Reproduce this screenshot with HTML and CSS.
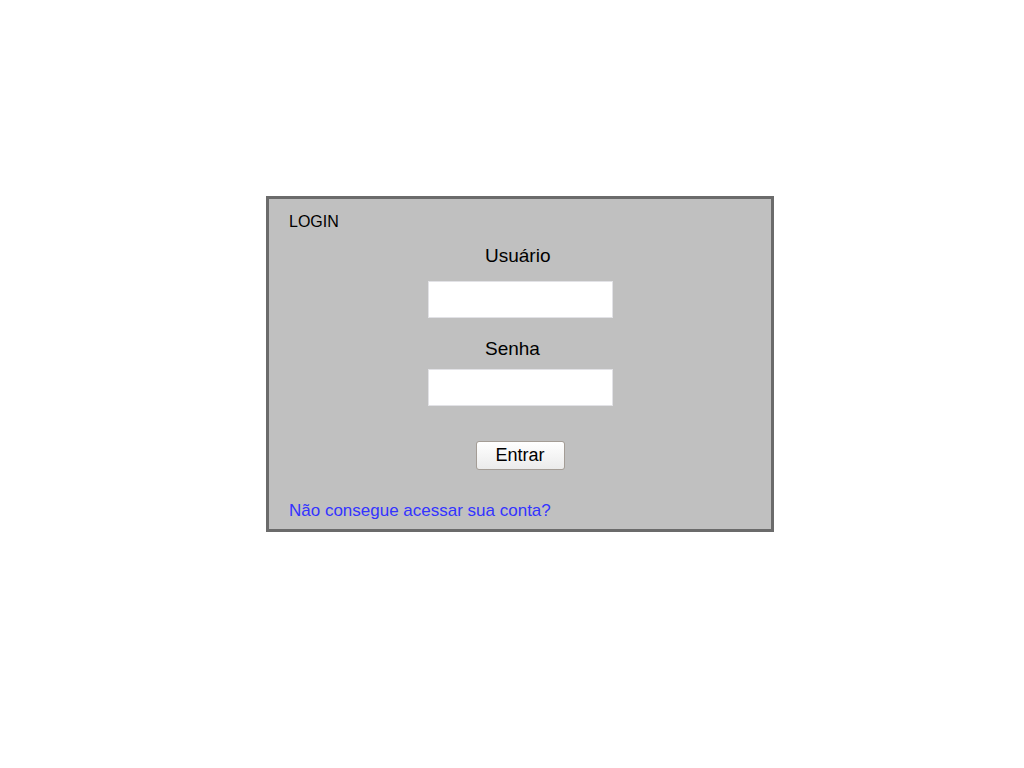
FILE: index.html
```html
<!DOCTYPE html>
<html lang="pt">
<head>
<meta charset="utf-8">
<title>Login</title>
<link rel="stylesheet" href="styles.css">
</head>
<body>
<div class="login">
  <div class="title">LOGIN</div>
  <form class="form">
    <label class="label label-user" for="u">Usuário</label>
    <input class="field field-user" id="u" type="text">
    <label class="label label-pass" for="p">Senha</label>
    <input class="field field-pass" id="p" type="password">
    <button class="btn" type="button">Entrar</button>
  </form>
  <a class="link" href="#">Não consegue acessar sua conta?</a>
</div>
</body>
</html>
```

FILE: styles.css
```css
html, body {
  margin: 0;
  padding: 0;
  background: #ffffff;
}
body {
  font-family: "Liberation Sans", Arial, sans-serif;
  padding-top: 196px;
}
.login {
  box-sizing: border-box;
  width: 508px;
  height: 336px;
  margin-left: 266px;
  border: 3px solid #6b6b6b;
  background: #c0c0c0;
  padding: 14px 20px 0 20px;
  display: flex;
  flex-direction: column;
}
.title {
  font-size: 16px;
  line-height: 18px;
  color: #000;
}
.form {
  display: flex;
  flex-direction: column;
  align-items: center;
  margin: 0;
}
.label {
  align-self: flex-start;
  margin-left: 196px;
  font-size: 19px;
  line-height: 22px;
  color: #000;
}
.label-user {
  margin-top: 14px;
}
.label-pass {
  margin-top: 20px;
}
.field {
  box-sizing: border-box;
  width: 185px;
  height: 37px;
  border: 1px solid #e2e2e6;
  background: #fff;
  padding: 0 4px;
  font-size: 16px;
}
.field-user {
  margin: 14px 0 0 1px;
}
.field-pass {
  margin: 9px 0 0 1px;
}
.btn {
  box-sizing: border-box;
  width: 89px;
  height: 29px;
  margin-top: 35px;
  border: 1px solid #a49d96;
  border-radius: 3px;
  background: linear-gradient(#ffffff, #ebebeb);
  font-family: "Liberation Sans", Arial, sans-serif;
  font-size: 18px;
  color: #000;
  padding: 0;
}
.link {
  margin-top: 31px;
  font-size: 17px;
  line-height: 20px;
  color: #3333ff;
  text-decoration: none;
  align-self: flex-start;
}
```
